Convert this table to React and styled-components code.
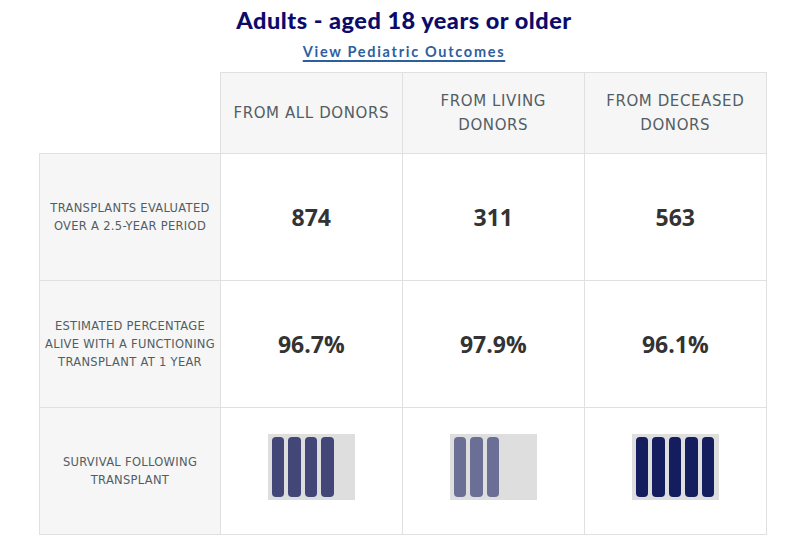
import React from "react";
import styled, { createGlobalStyle } from "styled-components";

const GlobalStyle = createGlobalStyle`
  html, body {
    margin: 0;
    padding: 0;
    background: #fff;
  }
  body {
    font-family: "DejaVu Sans", sans-serif;
  }
`;

const Page = styled.div`
  width: 808px;
  display: flex;
  flex-direction: column;
  align-items: center;
  padding-top: 6px;
`;

const Title = styled.h2`
  margin: 0;
  font-family: "Lato", sans-serif;
  font-weight: 900;
  font-size: 23.5px;
  line-height: 28px;
  color: #0c0b6b;
  letter-spacing: 0.5px;
`;

const PedLink = styled.a`
  margin-top: 10px;
  font-family: "Lato", sans-serif;
  font-weight: 700;
  font-size: 14.5px;
  line-height: 16px;
  letter-spacing: 1.7px;
  color: #2d5f9f;
  text-decoration: underline;
  text-underline-offset: 3px;
  text-decoration-thickness: 2px;
  cursor: pointer;
`;

const Table = styled.table`
  margin-top: 12px;
  margin-right: 2px;
  border-collapse: collapse;
  table-layout: fixed;
  width: 726px;
`;

const Corner = styled.th`
  width: 180px;
  padding: 0;
  border: none;
  background: #fff;
`;

const HeadCell = styled.th`
  width: 157px;
  height: 80px;
  padding: 0 12px;
  background: #f6f6f6;
  border: 1px solid #e0e0e0;
  font-weight: 400;
  font-size: 15px;
  line-height: 24px;
  letter-spacing: 0.6px;
  color: #535e64;
  text-transform: uppercase;
  text-align: center;
  vertical-align: middle;
`;

const LabelCell = styled.td`
  height: 126px;
  padding: 0 4px;
  background: #f6f6f6;
  border: 1px solid #e0e0e0;
  font-size: 11.5px;
  line-height: 18px;
  letter-spacing: 0.3px;
  color: #525d63;
  text-transform: uppercase;
  text-align: center;
  vertical-align: middle;
`;

const ValueCell = styled.td`
  background: #fff;
  border: 1px solid #e0e0e0;
  font-family: "Open Sans", sans-serif;
  font-weight: 700;
  font-size: 23px;
  color: #333;
  text-align: center;
  vertical-align: middle;
`;

const Meter = styled.div`
  margin: 0 auto 8px;
  width: 87px;
  height: 66px;
  background: #dedede;
  display: flex;
  gap: 4px;
  padding: 3px 4px;
  box-sizing: border-box;
`;

const Bar = styled.span`
  width: 12.5px;
  height: 100%;
  border-radius: 4px;
  background: ${(p) => p.$color};
`;

const columns = [
  { title: "From all donors", count: "874", pct: "96.7%", bars: 4, color: "#434777" },
  { title: "From living donors", count: "311", pct: "97.9%", bars: 3, color: "#6b6f96" },
  { title: "From deceased donors", count: "563", pct: "96.1%", bars: 5, color: "#141e5f" },
];

function SurvivalMeter({ bars, color }) {
  return (
    <Meter>
      {Array.from({ length: bars }).map((_, i) => (
        <Bar key={i} $color={color} />
      ))}
    </Meter>
  );
}

export default function App() {
  return (
    <>
      <GlobalStyle />
      <Page>
        <Title>Adults - aged 18 years or older</Title>
        <PedLink>View Pediatric Outcomes</PedLink>
        <Table>
          <thead>
            <tr>
              <Corner />
              {columns.map((c) => (
                <HeadCell key={c.title}>{c.title}</HeadCell>
              ))}
            </tr>
          </thead>
          <tbody>
            <tr>
              <LabelCell>
                Transplants evaluated
                <br />
                over a 2.5-year period
              </LabelCell>
              {columns.map((c) => (
                <ValueCell key={c.title}>{c.count}</ValueCell>
              ))}
            </tr>
            <tr>
              <LabelCell>
                Estimated percentage
                <br />
                alive with a functioning
                <br />
                transplant at 1 year
              </LabelCell>
              {columns.map((c) => (
                <ValueCell key={c.title}>{c.pct}</ValueCell>
              ))}
            </tr>
            <tr>
              <LabelCell>
                Survival following
                <br />
                transplant
              </LabelCell>
              {columns.map((c) => (
                <ValueCell key={c.title}>
                  <SurvivalMeter bars={c.bars} color={c.color} />
                </ValueCell>
              ))}
            </tr>
          </tbody>
        </Table>
      </Page>
    </>
  );
}
